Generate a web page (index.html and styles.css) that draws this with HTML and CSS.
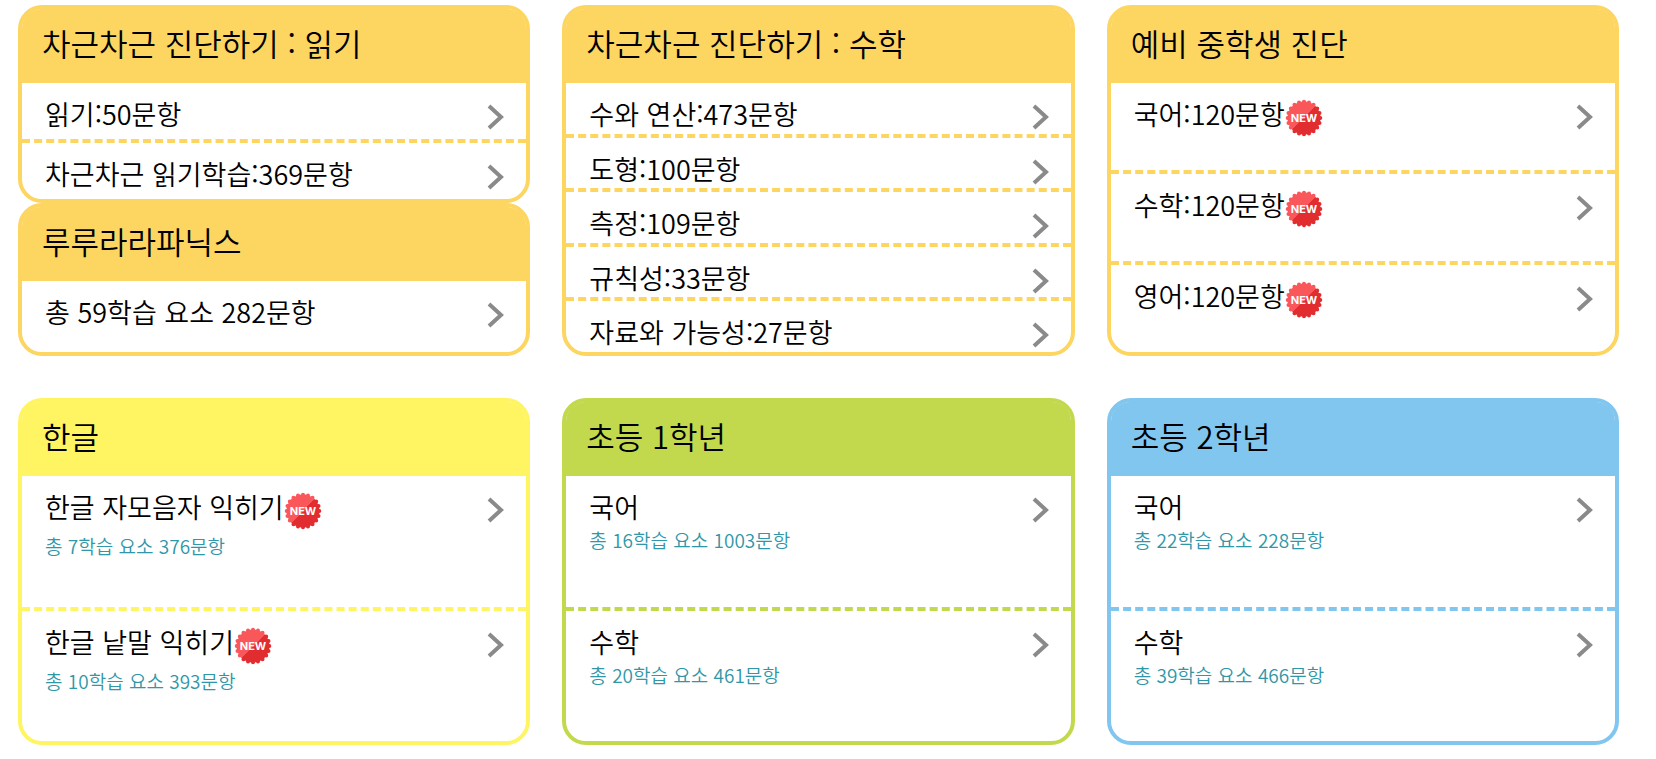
FILE: index.html
```html
<!DOCTYPE html>
<html lang="ko">
<head>
    <meta charset="UTF-8">
    <meta name="viewport" content="width=device-width, initial-scale=1.0">
    <title>차근차근 진단하기</title>
    <link rel="stylesheet" href="styles.css">
</head>
<body>
    <!-- shared icons -->
    <svg class="sprite" aria-hidden="true">
        <defs>
            <linearGradient id="shine" gradientUnits="userSpaceOnUse" x1="0" y1="0" x2="38" y2="38">
                <stop offset="0.5" stop-color="#f9575a"/>
                <stop offset="0.5" stop-color="#e12d30"/>
            </linearGradient>
        </defs>
        <symbol id="arrow" viewBox="0 0 18 26">
            <path d="M2 2 L14 13 L2 24" fill="none" stroke="#8a8a8a" stroke-width="4"/>
        </symbol>
        <symbol id="seal" viewBox="0 0 38 38">
            <circle cx="19" cy="19" r="16.5" fill="url(#shine)"/>
            <circle cx="19" cy="19" r="16.3" fill="none" stroke="url(#shine)" stroke-width="4" stroke-linecap="round" pathLength="20" stroke-dasharray="0 1"/>
        </symbol>
    </svg>

    <main class="container">
        <div class="column">
            <section class="card orange">
                <h2>차근차근 진단하기 : 읽기</h2>
                <ul>
                    <li><a href="#"><span class="name">읽기:50문항</span><svg class="arrow"><use href="#arrow"/></svg></a></li>
                    <li><a href="#"><span class="name">차근차근 읽기학습:369문항</span><svg class="arrow"><use href="#arrow"/></svg></a></li>
                </ul>
            </section>
            <section class="card orange fill">
                <h2>루루라라파닉스</h2>
                <ul>
                    <li><a href="#"><span class="name">총 59학습 요소 282문항</span><svg class="arrow"><use href="#arrow"/></svg></a></li>
                </ul>
            </section>
        </div>

        <section class="card orange">
            <h2>차근차근 진단하기 : 수학</h2>
            <ul>
                <li><a href="#"><span class="name">수와 연산:473문항</span><svg class="arrow"><use href="#arrow"/></svg></a></li>
                <li><a href="#"><span class="name">도형:100문항</span><svg class="arrow"><use href="#arrow"/></svg></a></li>
                <li><a href="#"><span class="name">측정:109문항</span><svg class="arrow"><use href="#arrow"/></svg></a></li>
                <li><a href="#"><span class="name">규칙성:33문항</span><svg class="arrow"><use href="#arrow"/></svg></a></li>
                <li><a href="#"><span class="name">자료와 가능성:27문항</span><svg class="arrow"><use href="#arrow"/></svg></a></li>
            </ul>
        </section>

        <section class="card orange">
            <h2>예비 중학생 진단</h2>
            <ul>
                <li><a href="#"><span class="name">국어:120문항<svg class="new"><use href="#seal"/><text x="19" y="23">NEW</text></svg></span><svg class="arrow"><use href="#arrow"/></svg></a></li>
                <li><a href="#"><span class="name">수학:120문항<svg class="new"><use href="#seal"/><text x="19" y="23">NEW</text></svg></span><svg class="arrow"><use href="#arrow"/></svg></a></li>
                <li><a href="#"><span class="name">영어:120문항<svg class="new"><use href="#seal"/><text x="19" y="23">NEW</text></svg></span><svg class="arrow"><use href="#arrow"/></svg></a></li>
            </ul>
        </section>

        <section class="card yellow">
            <h2>한글</h2>
            <ul>
                <li><a href="#"><div><span class="name">한글 자모음자 익히기<svg class="new"><use href="#seal"/><text x="19" y="23">NEW</text></svg></span><p>총 7학습 요소 376문항</p></div><svg class="arrow"><use href="#arrow"/></svg></a></li>
                <li><a href="#"><div><span class="name">한글 낱말 익히기<svg class="new"><use href="#seal"/><text x="19" y="23">NEW</text></svg></span><p>총 10학습 요소 393문항</p></div><svg class="arrow"><use href="#arrow"/></svg></a></li>
            </ul>
        </section>

        <section class="card green">
            <h2>초등 1학년</h2>
            <ul>
                <li><a href="#"><div><span class="name">국어</span><p>총 16학습 요소 1003문항</p></div><svg class="arrow"><use href="#arrow"/></svg></a></li>
                <li><a href="#"><div><span class="name">수학</span><p>총 20학습 요소 461문항</p></div><svg class="arrow"><use href="#arrow"/></svg></a></li>
            </ul>
        </section>

        <section class="card blue">
            <h2>초등 2학년</h2>
            <ul>
                <li><a href="#"><div><span class="name">국어</span><p>총 22학습 요소 228문항</p></div><svg class="arrow"><use href="#arrow"/></svg></a></li>
                <li><a href="#"><div><span class="name">수학</span><p>총 39학습 요소 466문항</p></div><svg class="arrow"><use href="#arrow"/></svg></a></li>
            </ul>
        </section>
    </main>
</body>
</html>
```
FILE: styles.css
```css
body {
    margin: 0;
    background-color: #fff;
    color: #000;
    font-family: "Noto Sans CJK KR", sans-serif;
    font-weight: 350;
}

.sprite {
    display: block;
    width: 0;
    height: 0;
}

.container {
    display: grid;
    grid-template-columns: repeat(3, 1fr);
    grid-template-rows: minmax(351px, auto) minmax(347px, auto);
    gap: 42px 32px;
    padding: 5px 37px 14px 18px;
}

.column {
    display: flex;
    flex-direction: column;
}

.card {
    display: flex;
    flex-direction: column;
    border: 4px solid;
    border-radius: 24px;
}

.column .card ul {
    min-height: 116px;
}

.column .fill {
    flex: 1;
}

.column .fill ul {
    min-height: 0;
}

.orange {
    border-color: #fdd561;
}

.orange h2 {
    background-color: #fdd561;
}

.yellow {
    border-color: #fff562;
}

.yellow h2 {
    background-color: #fff562;
}

.green {
    border-color: #c2d94e;
}

.green h2 {
    background-color: #c2d94e;
}

.blue {
    border-color: #80c6ef;
}

.blue h2 {
    background-color: #80c6ef;
}

h2 {
    margin: 0;
    padding: 14px 20px 20px;
    border-radius: 19px 19px 0 0;
    font-size: 31px;
    font-weight: 350;
    line-height: 40px;
}

ul {
    display: flex;
    flex: 1;
    flex-direction: column;
    margin: 0;
    padding: 0;
    list-style: none;
}

li {
    flex: 1 1 0;
    border-bottom: 4px dashed;
    border-color: inherit;
}

.card ul {
    border-color: inherit;
}

li:last-child {
    border-bottom: none;
}

a {
    display: flex;
    justify-content: space-between;
    align-items: flex-start;
    padding: 14px 21px 0 23px;
    color: inherit;
    text-decoration: none;
}

.name {
    display: flex;
    align-items: flex-start;
    font-size: 27px;
    line-height: 34px;
}

p {
    margin: 0;
    color: #2f97a8;
    font-size: 19px;
    font-weight: 350;
    line-height: 32px;
}

.arrow {
    flex: none;
    width: 18px;
    height: 26px;
    margin-top: 7px;
}

.new {
    flex: none;
    width: 38px;
    height: 38px;
    margin-top: 2px;
}

.new text {
    fill: #fff;
    font-family: Inter, sans-serif;
    font-size: 11px;
    font-weight: 700;
    text-anchor: middle;
}
```
